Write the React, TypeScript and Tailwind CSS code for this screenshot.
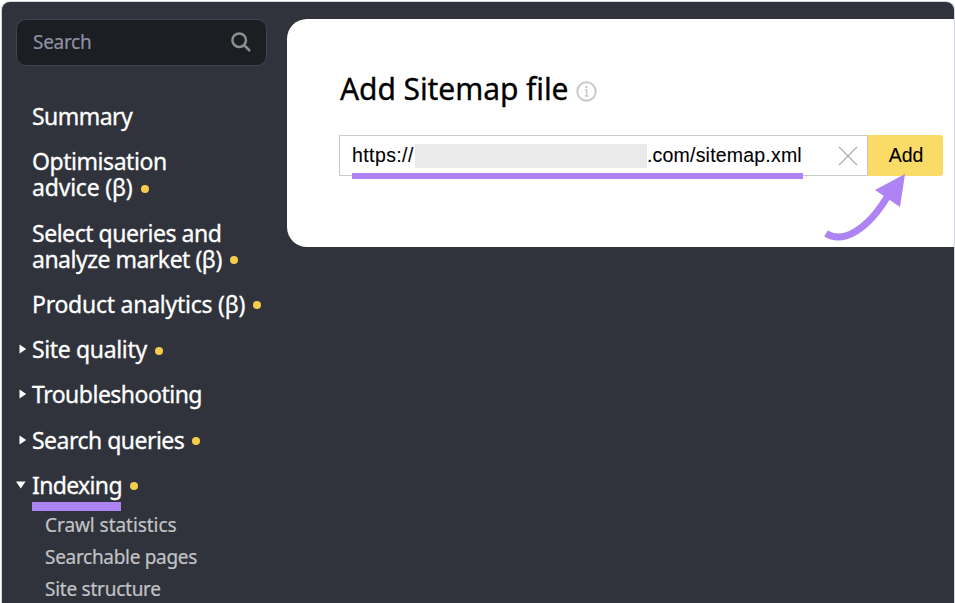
import React from "react";

const dot = <span className="mt-[3px] ml-[8px] size-[8px] shrink-0 rounded-full bg-[#f6cd4b]" />;

function Item({ lines, tracking, badge, arrow }: { lines: string[]; tracking: string[]; badge?: boolean; arrow?: "right" | "down" }) {
  return (
    <li className="flex">
      <span className="flex h-[26px] w-[16px] shrink-0 items-center">
        {arrow === "right" && (
          <svg className="ml-[3px] block" width="8" height="10" viewBox="0 0 8 10"><path d="M.5.5 7.2 5 .5 9.5z" fill="#fff" /></svg>
        )}
        {arrow === "down" && (
          <svg className="block" width="10" height="8" viewBox="0 0 10 8"><path d="M0 .5h9.6L4.8 7.5z" fill="#fff" /></svg>
        )}
      </span>
      <div>
        {lines.map((line, i) => (
          <div key={line} className="flex h-[26px] items-center whitespace-nowrap leading-[26px]">
            <span className={tracking[i]}>{line}</span>
            {badge && i === lines.length - 1 && dot}
          </div>
        ))}
      </div>
    </li>
  );
}

export default function App() {
  return (
    <div className="h-[603px] w-[955px] overflow-hidden bg-white pt-[2px] pl-[2px] font-['Noto_Sans',sans-serif]">
      <div className="flex h-[601px] w-[952px] overflow-hidden rounded-t-[8px] bg-[#30333b] ring-1 ring-[#d3d5df]">
        <aside className="w-[285px] shrink-0 pt-[17px] pl-[14px]">
          <div className="flex h-[47px] w-[251px] items-center justify-between rounded-[10px] border border-[#414351] bg-[#1b1e22] pr-[15px] pl-[16px] text-[#8f91a5]">
            <span className="text-[19px] tracking-[-0.3px] [-webkit-text-stroke:0.2px]">Search</span>
            <svg className="mb-[2px]" width="20" height="20" viewBox="0 0 20 20" fill="none" stroke="#8d8d8d" strokeWidth="2.5">
              <circle cx="8.2" cy="8.2" r="6.8" /><path d="m13 13 6 6" />
            </svg>
          </div>
          <ul className="mt-[37px] flex flex-col gap-[19.25px] text-[23px] text-white [-webkit-text-stroke:0.3px]">
            <Item lines={["Summary"]} tracking={["tracking-[-0.55px]"]} />
            <Item lines={["Optimisation", "advice (β)"]} tracking={["tracking-[-0.45px]", "tracking-[-0.2px]"]} badge />
            <Item lines={["Select queries and", "analyze market (β)"]} tracking={["tracking-[-0.47px]", "tracking-[-0.5px]"]} badge />
            <Item lines={["Product analytics (β)"]} tracking={["tracking-[-0.25px]"]} badge />
            <Item lines={["Site quality"]} tracking={["tracking-[-0.35px]"]} badge arrow="right" />
            <Item lines={["Troubleshooting"]} tracking={["tracking-[-0.5px]"]} arrow="right" />
            <Item lines={["Search queries"]} tracking={["tracking-[-0.52px]"]} badge arrow="right" />
            <Item lines={["Indexing"]} tracking={["tracking-[-0.65px]"]} badge arrow="down" />
          </ul>
          <div className="mt-[4px] ml-[16px] h-[9px] w-[89px] bg-[#ae83f4]" />
          <ul className="-mt-[2px] ml-[29px] text-[19px] leading-[32.3px] text-[#c2c3c6] [-webkit-text-stroke:0.2px]">
            <li><span className="tracking-[-0.05px]">Crawl statistics</span></li>
            <li><span className="tracking-[-0.3px]">Searchable pages</span></li>
            <li><span className="tracking-[-0.25px]">Site structure</span></li>
          </ul>
        </aside>
        <main className="relative mt-[17px] h-[228px] w-[667px] rounded-l-[20px] bg-white pt-[50px] pl-[52px]">
          <div className="flex h-[40px] items-center pl-px">
            <h1 className="text-[30px] leading-[40px] whitespace-nowrap text-black [-webkit-text-stroke:0.3px]"><span className="tracking-[-0.08px]">Add Sitemap file</span></h1>
            <svg className="mt-[4px] ml-[8px]" width="21" height="21" viewBox="0 0 21 21" fill="none" stroke="#c9c9c9">
              <circle cx="10.5" cy="10.5" r="9.2" strokeWidth="2" />
              <path d="M9 9h1.7v6M8.8 15h3.6" strokeWidth="1.5" /><path d="M9.4 6h2.1" strokeWidth="2" />
            </svg>
          </div>
          <div className="mt-[26px] flex h-[41px] w-[604px] font-['Liberation_Sans',Arial,sans-serif] text-[19.5px] text-black [-webkit-text-stroke:0.1px]">
            <div className="flex w-[529px] items-center border border-[#c9cace] pl-[12px]">
              <span className="w-[63px] tracking-[0.4px] whitespace-nowrap">https://</span>
              <span className="h-[24px] w-[232px] bg-[#eaeaea]" />
              <span className="w-[155px] tracking-[0.2px] whitespace-nowrap">.com/sitemap.xml</span>
              <svg className="ml-[36px]" width="20" height="20" viewBox="0 0 20 20" stroke="#adadad" strokeWidth="1.2"><path d="m1 1 18 18m0-18-18 18" /></svg>
            </div>
            <button className="w-[75px] rounded-r-[3px] bg-[#fadb66] pl-px">Add</button>
          </div>
          <div className="absolute top-[154px] left-[65px] h-[6px] w-[451px] bg-[#ae83f4]" />
          <svg className="absolute top-[151px] left-[533px]" width="90" height="75" viewBox="820 170 90 75">
            <path d="M826 233.5C843 244 868 230 889 194" fill="none" stroke="#ae83f4" strokeWidth="7" />
            <path d="m905 174-30 16 25 17z" fill="#ae83f4" />
          </svg>
        </main>
      </div>
    </div>
  );
}
